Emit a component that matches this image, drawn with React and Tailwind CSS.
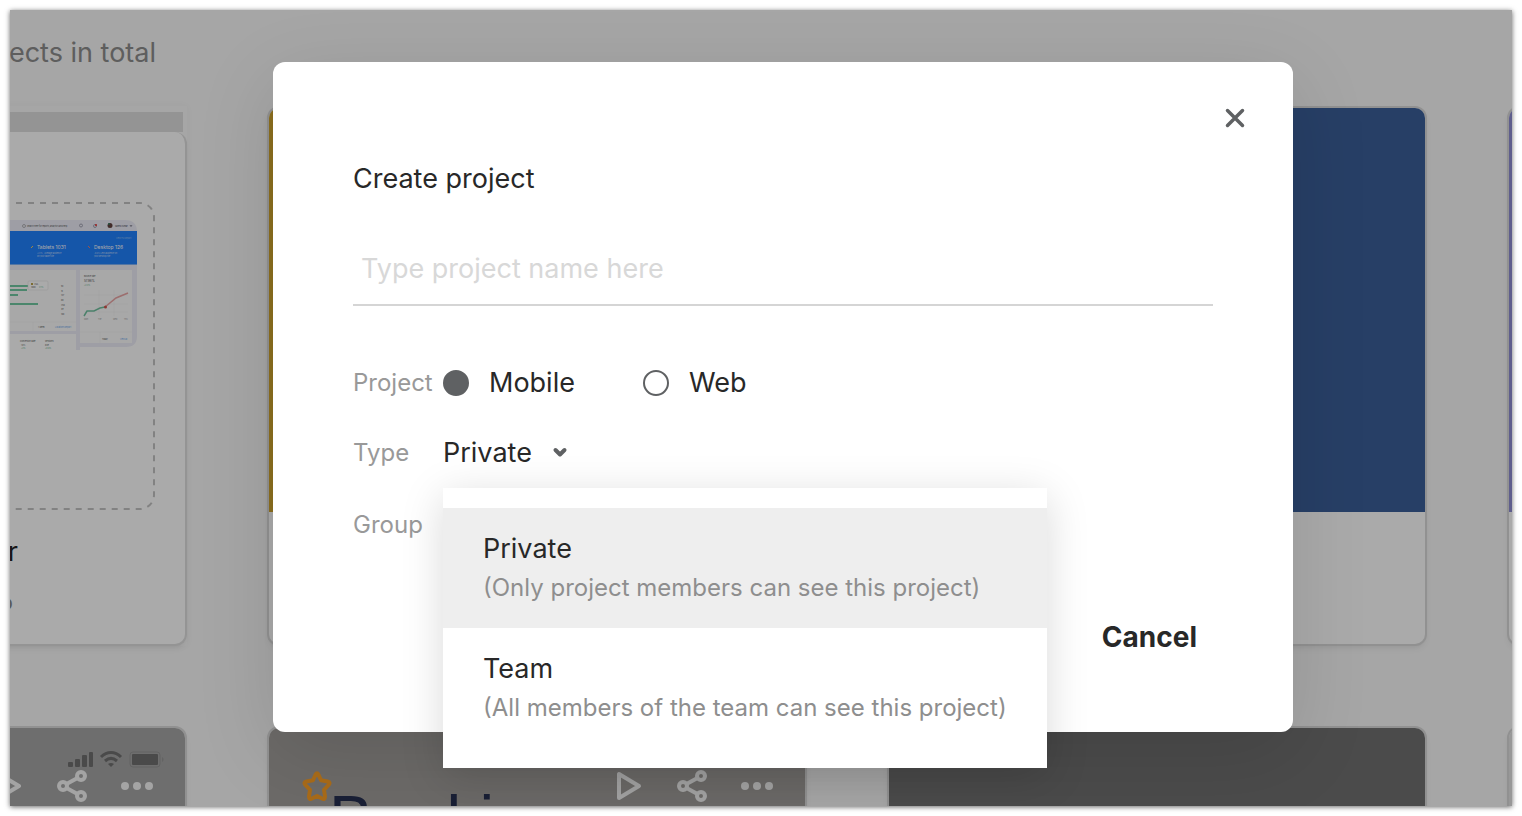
import { useState } from "react";

const TYPES = [
  { value: "Private", hint: "(Only project members can see this project)" },
  { value: "Team", hint: "(All members of the team can see this project)" },
];

function ShareIcon() {
  return (
    <svg width="32" height="34" viewBox="0 0 32 34" fill="none" stroke="#f6f6f6" strokeWidth="4">
      <circle cx="7" cy="17" r="4" />
      <circle cx="25" cy="7" r="4" />
      <circle cx="25" cy="27" r="4" />
      <path d="M10.5 15L21.5 9M10.5 19L21.5 25" />
    </svg>
  );
}

function PlayIcon() {
  return (
    <svg width="26" height="30" viewBox="0 0 26 30" fill="none" stroke="#f6f6f6" strokeWidth="4" strokeLinejoin="round">
      <path d="M3 3V27L23 15Z" />
    </svg>
  );
}

function MoreIcon() {
  return (
    <svg width="32" height="8" viewBox="0 0 32 8" fill="#f6f6f6">
      <circle cx="4" cy="4" r="4" />
      <circle cx="16" cy="4" r="4" />
      <circle cx="28" cy="4" r="4" />
    </svg>
  );
}

function StarIcon() {
  return (
    <svg width="30" height="30" viewBox="0 0 30 30" fill="none" stroke="#fca126" strokeWidth="4" strokeLinejoin="round">
      <path d="M13.600 3.500Q15 1 16.400 3.500L19 9.300L25.500 10.500Q29 11.500 26.500 14L22 18.800L23 25.500Q23 29 20 27.500L15 25L10 27.500Q7 29 7 25.500L8 18.800L3.500 14Q1 11.500 4.500 10.500L11 9.300Z" />
    </svg>
  );
}

function StatusIcons() {
  return (
    <svg width="98" height="18" viewBox="0 0 98 18" fill="#707070">
      <rect x="1" y="11" width="5" height="5" rx="1" />
      <rect x="8" y="8" width="5" height="8" rx="1" />
      <rect x="15" y="4" width="5" height="12" rx="1" />
      <rect x="22" y="1" width="4" height="15" rx="1" />
      <g fill="none" stroke="#707070" strokeWidth="3">
        <path d="M34 6C40 0 48 0 54 6" />
        <path d="M38 10C42 6.500 46 6.500 50 10" />
      </g>
      <path d="M41 13C43 11.500 45 11.500 47 13L44 16Z" />
      <rect x="63" y="1" width="30" height="15" rx="3" fill="none" stroke="#959595" />
      <rect x="65" y="3" width="26" height="11" rx="1" />
      <path d="M95 6C97 7 97 10 95 11Z" fill="#959595" />
    </svg>
  );
}

function CardActions() {
  return (
    <div className="ml-auto flex items-center text-white">
      <button aria-label="Play"><PlayIcon /></button>
      <button aria-label="Share" className="ml-[34px]"><ShareIcon /></button>
      <button aria-label="More" className="ml-[33px]"><MoreIcon /></button>
    </div>
  );
}

function DashboardPreview() {
  return (
    <svg width="127" height="130" viewBox="0 0 127 130" fontFamily="Inter, sans-serif">
      <path d="M0 0H115Q127 0 127 12V116Q127 127 116 127H70V130H0Z" fill="#eeeef8" />
      <rect y="11" width="127" height="34" fill="#2081fe" />
      <rect y="44" width="127" height="1" fill="#7fb2f7" />
      <rect y="50" width="66" height="61" fill="#fdfdfd" />
      <rect x="70" y="50" width="52" height="73" fill="#fdfdfd" />
      <rect y="114" width="66" height="16" fill="#fff" />

      <circle cx="14" cy="6" r="1.500" fill="none" stroke="#777" strokeWidth="0.500" />
      <text x="17" y="6.500" fontSize="2" fill="#555">Search here for reports, analytics and help</text>
      <circle cx="71" cy="5.500" r="1.500" fill="none" stroke="#889" strokeWidth="0.700" />
      <circle cx="85" cy="6" r="1.500" fill="none" stroke="#889" strokeWidth="0.700" />
      <circle cx="86" cy="5" r="1" fill="#e33" />
      <circle cx="100" cy="5.500" r="2.500" fill="#624240" />
      <circle cx="99" cy="4" r="1" fill="#397a62" />
      <text x="105" y="6.500" fontSize="2" fill="#445">Sahed Kumar</text>
      <path d="M120 5L121 6.500L122 5" stroke="#445" strokeWidth="0.600" fill="none" />

      <text x="106" y="18.500" fontSize="2" fill="#9ac4fb">View Full Report</text>
      <path d="M21 28L23 26" stroke="#ffcb55" />
      <path d="M78 26L80 28" stroke="#f47c62" />
      <g fill="#fff">
        <text x="27" y="29" fontSize="5">Tablets 1031</text>
        <text x="84" y="29" fontSize="5">Desktop 126</text>
        <g fontSize="2" opacity="0.700">
          <text x="27" y="33.500">+2.1% , Average audience</text>
          <text x="27" y="37">on your tablet site</text>
          <text x="84" y="33.500">-0.4% Less audience on</text>
          <text x="84" y="37">your desktop site</text>
        </g>
      </g>

      <g fill="#71c9a2">
        <rect y="65" width="20" height="2" />
        <rect y="69" width="17" height="2" />
        <rect y="74" width="8" height="2" />
        <rect y="83" width="28" height="2" />
      </g>
      <rect x="18" y="61" width="20" height="9" rx="1" fill="#fff" stroke="#ddd" strokeWidth="0.500" />
      <g fontSize="2" fill="#555">
        <rect x="21" y="63" width="2" height="2" fill="#bba34c" />
        <text x="24" y="65">USA</text>
        <text x="21" y="68">1000</text>
        <text x="29" y="68" fill="#47a97c">2.1%</text>
        <text x="51" y="67">5k</text>
        <text x="51" y="71.500">1k</text>
        <text x="51" y="76">137</text>
        <text x="51" y="81">88</text>
        <text x="51" y="85.500">250</text>
        <text x="51" y="90">39</text>
        <text x="51" y="94.500">100</text>
        <text x="28" y="108">1 Week</text>
        <text x="45" y="108" fill="#63a4ee">Locations Report</text>
        <text x="10" y="121.500">Conversion Rate</text>
        <text x="35" y="121.500">Sessions</text>
        <text x="11" y="126">1.8%</text>
        <text x="35" y="126">849</text>
        <text x="11" y="129" fill="#39a274">+2%</text>
        <text x="35" y="129" fill="#39a274">+3.4%</text>
        <text x="74" y="57">Bounce rate</text>
        <text x="74" y="62" fontSize="3">57.96%</text>
        <text x="74" y="65.500" fill="#39a274">+2.2%</text>
        <text x="92" y="120">Today</text>
        <text x="110" y="120" fill="#63a4ee">View all</text>
      </g>
      <g fontSize="2" fill="#999">
        <text x="74" y="100">Mon</text>
        <text x="88" y="100">Tue</text>
        <text x="103" y="100">Wed</text>
        <text x="114" y="100">Thu</text>
      </g>
      <path d="M74 75H118M74 84H118M74 92H118M89 70V96M104 70V96" stroke="#eee" strokeWidth="0.500" />
      <path d="M23 102V111M90 112V123M0 102H66M70 112H122" stroke="#eee" strokeWidth="0.500" />
      <path d="M74 96L77 91H84L90 88L95 87" fill="none" stroke="#71c2a0" strokeWidth="1.500" />
      <path d="M95 87L106 78L118 73" fill="none" stroke="#eaa5a5" strokeWidth="1.500" />
      <circle cx="95.500" cy="87" r="1.500" fill="#d2554f" />
    </svg>
  );
}

function SampleCard() {
  return (
    <article className="flex h-[540px] w-[540px] shrink-0 flex-col pt-1.5 shadow-[0_0_8px_rgba(0,0,0,0.03)]">
      <div className="mr-1 h-5 bg-[#dfdfdf]" />
      <div className="flex flex-1 flex-col items-end rounded-xl border-2 border-t-0 border-[#dedede] bg-white shadow-md shadow-black/5">
        <div className="relative mt-[70px] mr-[30px] flex h-[308px] w-[476px] justify-end pt-[18px] pr-[18px]">
          <svg className="absolute inset-0" width="476" height="308" fill="none" stroke="#c4c4c4" strokeWidth="2">
            <rect x="1" y="1" width="474" height="306" rx="14" strokeDasharray="6 6" strokeDashoffset="2" />
          </svg>
          <DashboardPreview />
        </div>
        <p className="mt-6 mr-[167px] text-[27px] leading-9 text-[#222]">r</p>
        <p className="mt-4 mr-[172px] text-[22px] leading-8 text-[#888]">o</p>
      </div>
    </article>
  );
}

function ProjectCard({ cover, children }) {
  return (
    <article className="h-[540px] w-[540px] shrink-0 overflow-hidden rounded-xl border-2 border-[#dadada] bg-white shadow-md shadow-black/5">
      <div className={`h-[404px] ${cover}`}>{children}</div>
    </article>
  );
}

function ProjectGallery() {
  return (
    <main>
      <p className="flex h-24 w-[146px] justify-end pt-[25px] text-[27px] leading-9 whitespace-nowrap text-[#8d8d8d]">
        projects in total
      </p>
      <div className="-ml-[363px] flex gap-20">
        <SampleCard />
        <ProjectCard cover="bg-[#d2a72f]" />
        <ProjectCard cover="bg-[#3b5f99]" />
        <ProjectCard cover="bg-[#8f8dd3]" />
      </div>
      <div className="mt-20 -ml-[363px] flex gap-20">
        <ProjectCard cover="bg-[#a5a5a5]">
          <div className="flex flex-col items-end pt-[23px] pr-5">
            <StatusIcons />
            <div className="pr-3"><CardActions /></div>
          </div>
        </ProjectCard>
        <ProjectCard cover="bg-[#a3a09d]">
          <div className="flex items-center pt-[41px] pr-8 pl-[33px]">
            <button aria-label="Favorite"><StarIcon /></button>
            <CardActions />
          </div>
          <p className="-mt-3.5 pl-[60px] font-['Liberation_Sans',sans-serif] text-[66px] leading-[60px] text-[#273051]">Booking</p>
        </ProjectCard>
        <ProjectCard cover="bg-[#717171]" />
        <ProjectCard cover="bg-[#e5e5e5]" />
      </div>
    </main>
  );
}

function TypeMenu({ selected, onSelect }) {
  return (
    <div
      role="listbox"
      aria-label="Type"
      className="absolute top-[53px] left-0 z-10 w-[604px] bg-white py-5 shadow-[0_8px_40px_rgba(0,0,0,0.15)]"
    >
      {TYPES.map(({ value, hint }) => (
        <button
          key={value}
          type="button"
          role="option"
          aria-selected={value === selected}
          onClick={() => onSelect(value)}
          className={`block h-[120px] w-full px-10 text-left whitespace-nowrap ${value === selected ? "bg-[#eee]" : "bg-white"}`}
        >
          <span className="block text-[27px] leading-10">{value}</span>
          <span className="block text-[24px] leading-[38px] text-[#8e8e8e]">{hint}</span>
        </button>
      ))}
    </div>
  );
}

function CreateProjectModal() {
  const [name, setName] = useState("");
  const [platform, setPlatform] = useState("Mobile");
  const [type, setType] = useState("Private");

  return (
    <form
      role="dialog"
      aria-labelledby="create-title"
      onSubmit={(e) => e.preventDefault()}
      className="w-[1020px] rounded-xl bg-white px-20 pt-10 pb-[77px] text-[27px] leading-9 text-[#282828] shadow-[0_20px_80px_rgba(0,0,0,0.12)]"
    >
      <div className="-mr-[38px] flex justify-end">
        <button type="button" aria-label="Close" className="p-1.5">
          <svg width="20" height="20" viewBox="0 0 20 20" stroke="#5f6163" strokeWidth="3.500" strokeLinecap="round">
            <path d="M2.500 2.500L17.500 17.500M17.500 2.500L2.500 17.500" />
          </svg>
        </button>
      </div>

      <h2 id="create-title" className="mt-[27px]">Create project</h2>

      <input
        aria-label="Project name"
        value={name}
        onChange={(e) => setName(e.target.value)}
        placeholder="Type project name here"
        className="mt-9 h-[73px] w-full border-b-2 border-[#d5d5d5] px-2 outline-none placeholder:text-[#d8d8d8]"
      />

      {/* Platform */}
      <div className="mt-[59px] flex h-9 items-center">
        <span className="w-[90px] text-[24px] text-[#999]">Project</span>
        {["Mobile", "Web"].map((item) => (
          <label key={item} className="flex w-[200px] items-center gap-5">
            <input
              type="radio"
              name="platform"
              checked={platform === item}
              onChange={() => setPlatform(item)}
              className="size-[26px] appearance-none rounded-full border-2 border-[#5f6163] checked:bg-[#5f6163]"
            />
            {item}
          </label>
        ))}
      </div>

      {/* Visibility */}
      <div className="mt-[34px] flex h-9 items-center">
        <span className="w-[90px] text-[24px] text-[#999]">Type</span>
        <div className="relative">
          <button type="button" aria-haspopup="listbox" aria-expanded="true" className="flex items-center gap-5">
            {type}
            <svg width="16" height="14" viewBox="0 0 16 14" fill="none" stroke="#5f6163" strokeWidth="4" strokeLinecap="round" strokeLinejoin="round">
              <path d="M3.500 4L8 8.500L12.500 4" />
            </svg>
          </button>
          <TypeMenu selected={type} onSelect={setType} />
        </div>
      </div>

      <div className="mt-9 flex h-9 items-center text-[24px] text-[#999]">Group</div>

      <div className="mt-[76px] flex justify-end pr-4">
        <button type="button" className="text-[28px] font-bold">Cancel</button>
      </div>
    </form>
  );
}

export default function App() {
  return (
    <div className="h-screen bg-white p-[10px] font-[Inter,sans-serif]">
      <div className="relative h-full overflow-hidden bg-[#f9f9f9] shadow-[0_1px_5px_rgba(0,0,0,0.6)]">
        <ProjectGallery />
        <div className="absolute inset-0 flex items-start justify-center bg-black/[0.333] pt-[52px] pl-11">
          <CreateProjectModal />
        </div>
      </div>
    </div>
  );
}
